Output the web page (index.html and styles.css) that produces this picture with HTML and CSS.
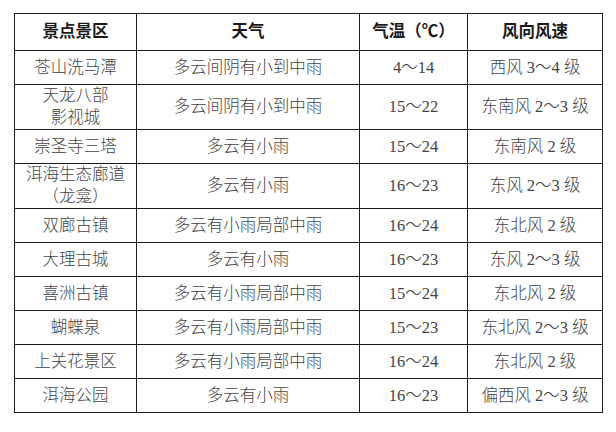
FILE: index.html
```html
<!DOCTYPE html>
<html lang="zh">
<head>
<meta charset="utf-8">
<link rel="stylesheet" href="styles.css">
</head>
<body>
<table class="weather">
  <colgroup>
    <col class="c1"><col class="c2"><col class="c3"><col class="c4">
  </colgroup>
  <thead>
    <tr class="head"><th>景点景区</th><th>天气</th><th>气温（℃）</th><th>风向风速</th></tr>
  </thead>
  <tbody>
    <tr class="row"><td>苍山洗马潭</td><td>多云间阴有小到中雨</td><td>4～14</td><td>西风 3～4 级</td></tr>
    <tr class="row tall"><td>天龙八部<br>影视城</td><td>多云间阴有小到中雨</td><td>15～22</td><td>东南风 2～3 级</td></tr>
    <tr class="row"><td>崇圣寺三塔</td><td>多云有小雨</td><td>15～24</td><td>东南风 2 级</td></tr>
    <tr class="row tall"><td>洱海生态廊道<br>（龙龛）</td><td>多云有小雨</td><td>16～23</td><td>东风 2～3 级</td></tr>
    <tr class="row"><td>双廊古镇</td><td>多云有小雨局部中雨</td><td>16～24</td><td>东北风 2 级</td></tr>
    <tr class="row"><td>大理古城</td><td>多云有小雨</td><td>16～23</td><td>东风 2～3 级</td></tr>
    <tr class="row"><td>喜洲古镇</td><td>多云有小雨局部中雨</td><td>15～24</td><td>东北风 2 级</td></tr>
    <tr class="row"><td>蝴蝶泉</td><td>多云有小雨局部中雨</td><td>15～23</td><td>东北风 2～3 级</td></tr>
    <tr class="row"><td>上关花景区</td><td>多云有小雨局部中雨</td><td>16～24</td><td>东北风 2 级</td></tr>
    <tr class="row"><td>洱海公园</td><td>多云有小雨</td><td>16～23</td><td>偏西风 2～3 级</td></tr>
  </tbody>
</table>
</body>
</html>
```
FILE: styles.css
```css
html, body {
  margin: 0;
  padding: 0;
  background: #ffffff;
}
body {
  padding: 13px 0 0 14px;
  font-family: "Liberation Serif", "Noto Sans CJK SC", serif;
  font-size: 16.5px;
  font-weight: 300;
  color: #444444;
}
.weather {
  border-collapse: collapse;
  table-layout: fixed;
  width: 588px;
}
.c1 { width: 122px; }
.c2 { width: 223px; }
.c3 { width: 108px; }
.c4 { width: 135px; }
.weather th,
.weather td {
  border: 1px solid #1a1a1a;
  text-align: center;
  vertical-align: middle;
  padding: 0;
  line-height: 22px;
}
.weather th {
  height: 36px;
  font-weight: bold;
  color: #1a1a1a;
}
.row td {
  height: 33px;
}
.row.tall td {
  height: 44px;
}
```
